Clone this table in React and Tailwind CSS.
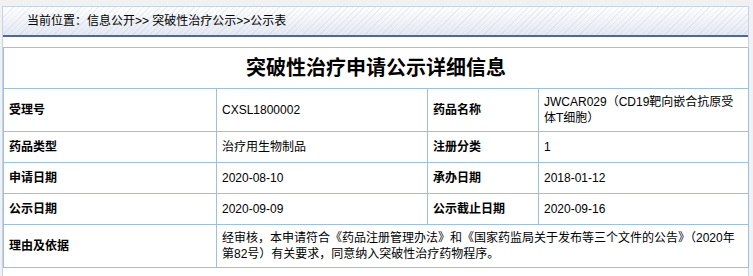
const rows = [
  { h: 'h-[43px]', a: '受理号', b: 'CXSL1800002', c: '药品名称', d: 'JWCAR029（CD19靶向嵌合抗原受体T细胞）' },
  { h: 'h-[31px]', a: '药品类型', b: '治疗用生物制品', c: '注册分类', d: '1' },
  { h: 'h-[31px]', a: '申请日期', b: '2020-08-10', c: '承办日期', d: '2018-01-12' },
  { h: 'h-[31px]', a: '公示日期', b: '2020-09-09', c: '公示截止日期', d: '2020-09-16' },
];

const cell = 'flex items-center border-r border-b border-[#9cc0e2] px-[5px] leading-[16px]';

export default function App() {
  return (
    <div
      className="min-h-screen w-full bg-[#f1f1f1] pt-[6px] text-[12px] text-black"
      style={{ fontFamily: '"Liberation Sans", Arial, "Noto Sans CJK SC", sans-serif' }}
    >
      <div className="ml-[2px] w-[747px] min-h-[280px] border border-[#c6d3e6] bg-white">
        <div className="flex h-[30px] items-center border-b-2 border-[#4a67a6] bg-[repeating-linear-gradient(135deg,rgba(255,255,255,0)_0px,rgba(255,255,255,0)_3px,rgba(190,198,215,0.25)_3px,rgba(190,198,215,0.25)_4px),linear-gradient(to_bottom,#ffffff,#e4e8f1)] pl-[24px]">
          当前位置：信息公开&gt;&gt; 突破性治疗公示&gt;&gt;公示表
        </div>

        <div className="mt-[10px] grid grid-cols-[213px_211px_111px_210px] border-t border-l border-[#9cc0e2]">
          <div className="col-span-4 flex h-[41px] items-center justify-center border-r border-b border-[#9cc0e2] text-[20px] font-bold">
            突破性治疗申请公示详细信息
          </div>
          {rows.map((r) => (
            <div key={r.a} className="contents">
              <div className={`${cell} ${r.h} font-bold`}>{r.a}</div>
              <div className={`${cell} ${r.h}`}>{r.b}</div>
              <div className={`${cell} ${r.h} font-bold`}>{r.c}</div>
              <div className={`${cell} ${r.h}`}>{r.d}</div>
            </div>
          ))}
          <div className={`${cell} h-[43px] font-bold`}>理由及依据</div>
          <div className={`${cell} col-span-3 h-[43px] pr-0`}>
            <span>
              经审核，本申请符合《药品注册管理办法》和《国家药监局关于发布等三个文件的公告》（2020年
              <br />
              第82号）有关要求，同意纳入突破性治疗药物程序。
            </span>
          </div>
        </div>
      </div>
    </div>
  );
}
